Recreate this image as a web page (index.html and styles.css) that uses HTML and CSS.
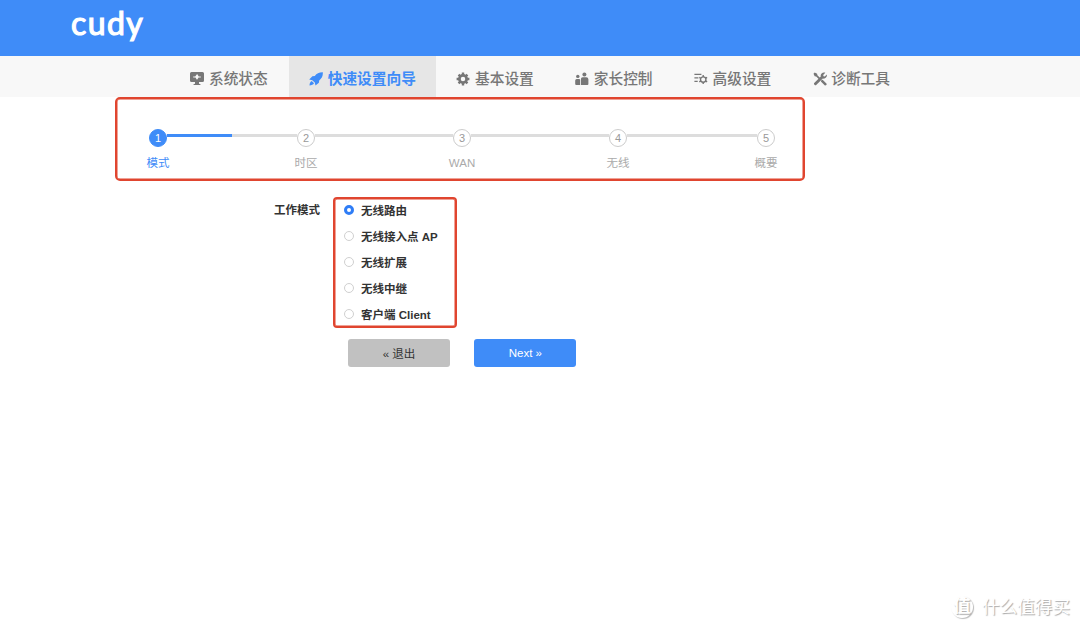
FILE: index.html
```html
<!DOCTYPE html>
<html lang="zh-CN">
<head>
    <meta charset="utf-8">
    <title>cudy</title>
    <link rel="stylesheet" href="styles.css">
</head>
<body>
    <header class="header">
        <span class="logo">cudy</span>
    </header>

    <nav class="nav">
        <a class="tab">
            <svg class="icon" viewBox="0 0 14 14"><path fill-rule="evenodd" d="M1.500 0h11q1.500 0 1.500 1.500v7q0 1.500-1.500 1.500h-3.500v1.700l1.500.5v.8h-7v-.8l1.500-.5v-1.700h-3.500q-1.500 0-1.500-1.500v-7q0-1.500 1.500-1.500zM3.200 4.500v1h2.300l1.200 1.900h.6l1.300-1.900h2.200v-1h-2l-1.700-2.600-1.900 2.600z"/></svg>
            <span>系统状态</span>
        </a>
        <a class="tab active">
            <svg class="icon" viewBox="0 0 14 14"><path d="M13.800.200c.3 3.600-.8 6-3.600 8.300l-.3 2.300-3.400 2.800-.7-3-2.500-2.400-3.100-.6 3.200-3.300 2.400-.3c1.900-2.700 4.400-3.900 8-3.800zM2.700 9l2.300 2.300c-.8 1.400-2.400 2-4.500 2.100.1-2 .7-3.700 2.200-4.400z"/></svg>
            <span>快速设置向导</span>
        </a>
        <a class="tab">
            <svg class="icon" viewBox="0 0 14 14">
                <circle cx="7" cy="7" r="3.600" fill="none" stroke="currentColor" stroke-width="2.700"/>
                <path d="M5.800.600h2.400v2.500h-2.400zM5.800 10.900h2.400v2.500h-2.400zM.6 5.800h2.500v2.400h-2.500zM10.900 5.800h2.500v2.400h-2.500zM1.700 3.400l1.700-1.700 1.800 1.800-1.700 1.700zM8.800 10.500l1.700-1.700 1.800 1.800-1.700 1.700zM1.700 10.600l1.800-1.800 1.700 1.700-1.800 1.800zM8.800 3.500l1.800-1.800 1.700 1.700-1.800 1.800z"/>
            </svg>
            <span>基本设置</span>
        </a>
        <a class="tab">
            <svg class="icon" viewBox="0 0 14 14">
                <circle cx="2.800" cy="4.400" r="1.700"/>
                <circle cx="9.400" cy="2.500" r="2"/>
                <path d="M.2 8.500q0-1.500 1.500-1.500h2.400q1 0 1 1v5h-3.900q-1 0-1-1zM5.900 7.200q0-1.900 1.800-1.900h3.500q2.200 0 2.200 1.900v4.800q0 1-1 1h-6.500z"/>
            </svg>
            <span>家长控制</span>
        </a>
        <a class="tab">
            <svg class="icon" viewBox="0 0 14 14">
                <path d="M.4 1.800h7v1.300h-7zM.4 5.300h4v1.300h-4zM.4 8.800h3.300v1.300h-3.300z"/>
                <circle cx="9.200" cy="7.600" r="2.700" fill="none" stroke="currentColor" stroke-width="1.400"/>
                <path fill="none" stroke="currentColor" stroke-width="1.400" d="M9.200 3.100v1.800M9.200 10.300v1.800M5.300 5.400l1.600.9M11.500 8.900l1.600.9M5.300 9.800l1.600-.9M11.500 6.300l1.600-.9"/>
            </svg>
            <span>高级设置</span>
        </a>
        <a class="tab">
            <svg class="icon" viewBox="0 0 14 14">
                <path d="M.5 1.700l1.200-1.200 2.400 1.300.3 1.500 3 3-1.200 1.200-3-3-1.500-.3zM8.300 8.200l1.300-.5 4 4q.4.600-.3 1.300t-1.400.4l-4-4z"/>
                <path d="M12.300.7l-2.100 2.200.3 1.300 1.300.3 2-2.100c.7 2.500-1.400 4.800-4 4.100l-6.600 6.600q-.8.600-1.700-.3t-.3-1.700l6.600-6.600c-.7-2.600 1.800-4.800 4.500-3.800z"/>
            </svg>
            <span>诊断工具</span>
        </a>
    </nav>

    <main class="main">
        <section class="wizard">
            <ol class="steps">
                <li class="step current"><span class="num">1</span><span class="label">模式</span></li>
                <li class="line half"></li>
                <li class="step"><span class="num">2</span><span class="label">时区</span></li>
                <li class="line long"></li>
                <li class="step"><span class="num">3</span><span class="label">WAN</span></li>
                <li class="line long"></li>
                <li class="step"><span class="num">4</span><span class="label">无线</span></li>
                <li class="line"></li>
                <li class="step"><span class="num">5</span><span class="label">概要</span></li>
            </ol>
        </section>

        <form class="form">
            <div class="row">
                <span class="title">工作模式</span>
                <div class="options">
                    <label class="option"><input type="radio" name="mode" checked>无线路由</label>
                    <label class="option"><input type="radio" name="mode">无线接入点 AP</label>
                    <label class="option"><input type="radio" name="mode">无线扩展</label>
                    <label class="option"><input type="radio" name="mode">无线中继</label>
                    <label class="option"><input type="radio" name="mode">客户端 Client</label>
                </div>
            </div>
            <div class="buttons">
                <button type="button" class="btn">« 退出</button>
                <button type="button" class="btn primary">Next »</button>
            </div>
        </form>
    </main>

    <div class="watermark">
        <span class="badge">值</span>
        <span>什么值得买</span>
    </div>
</body>
</html>
```

FILE: styles.css
```css
* {
    box-sizing: border-box;
}
body {
    margin: 0;
    height: 629px;
    overflow: hidden;
    background: #fff;
    color: #333;
    font-family: "Liberation Sans", "Noto Sans CJK SC", sans-serif;
    font-size: 11.5px;
}
.header {
    height: 56px;
    padding-left: 71px;
    background: #3f8cf8;
}
.logo {
    display: block;
    color: #fff;
    font-family: Lato, sans-serif;
    font-size: 32px;
    font-weight: 400;
    line-height: 45px;
    letter-spacing: 1.4px;
    -webkit-text-stroke: 1.2px #fff;
}

/* top menu */
.nav {
    display: flex;
    justify-content: center;
    height: 41px;
    padding-left: 1.4px;
    background: #f8f8f8;
}
.tab {
    display: flex;
    align-items: center;
    gap: 4.6px;
    padding: 4px 21.2px 0 20.2px;
    color: #777;
    font-size: 14.7px;
    font-weight: 500;
    line-height: 20px;
}
.tab.active {
    padding-right: 20.4px;
    background: #e6e6e6;
    color: #3f8cf8;
    font-weight: bold;
}
.icon {
    width: 14px;
    height: 14px;
    fill: currentColor;
}

/* wizard steps */
.main {
    padding-left: 115px;
}
.wizard {
    width: 690px;
    height: 84px;
    padding: 30px 0 0 32px;
    border: 2px solid #e0452f;
    border-radius: 5px;
    box-shadow: inset 0 0 0 0.5px #e0452f;
}
.steps {
    display: flex;
    margin: 0;
    padding: 0;
    list-style: none;
}
.step {
    display: flex;
    flex-direction: column;
    align-items: center;
    gap: 8px;
    width: 18px;
    color: #aaa;
}
.num {
    width: 18px;
    height: 18px;
    border: 1px solid #ccc;
    border-radius: 50%;
    color: #999;
    font-size: 11px;
    line-height: 17px;
    text-align: center;
}
.label {
    line-height: 16px;
    white-space: nowrap;
}
.current {
    color: #3f8cf8;
}
.current .num {
    background: #3f8cf8;
    border-color: #3f8cf8;
    color: #fff;
}
.line {
    width: 130px;
    height: 3px;
    margin-top: 5px;
    background: #ddd;
}
.line.long {
    width: 138px;
}
.line.half {
    background: linear-gradient(to right, #3f8cf8 50%, #ddd 50%);
}

/* work mode */
.form {
    padding-top: 16px;
    font-weight: bold;
}
.row {
    display: flex;
    gap: 13px;
}
.title {
    width: 205px;
    padding-top: 4px;
    line-height: 18px;
    text-align: right;
}
.options {
    width: 124px;
    height: 131px;
    padding-left: 9px;
    border: 2px solid #e0452f;
    border-radius: 4px;
    box-shadow: inset 0 0 0 0.5px #e0452f;
}
.option {
    display: flex;
    align-items: center;
    gap: 7px;
    height: 26.2px;
    white-space: nowrap;
}
.option:first-child {
    height: 22px;
    margin-bottom: 1.5px;
}
.option input {
    appearance: none;
    width: 10px;
    height: 10px;
    margin: 0;
    border: 1px solid #d0d0d0;
    border-radius: 50%;
    background: #fff;
}
.option input:checked {
    border: 3px solid #2f7df6;
}
.buttons {
    display: flex;
    gap: 24.4px;
    padding: 11.4px 0 0 233px;
}
.btn {
    width: 102px;
    height: 28px;
    padding: 0;
    border: 0;
    border-radius: 3px;
    background: #c1c1c1;
    color: #333;
    font-family: inherit;
    font-size: 11.5px;
}
.btn.primary {
    background: #3f8cf8;
    color: #fff;
}

/* watermark over the page corner */
.watermark {
    position: absolute;
    right: 10px;
    bottom: 9px;
    display: flex;
    align-items: center;
    gap: 9px;
    color: #fff;
    font-size: 17.6px;
    line-height: 26px;
    text-shadow: 1px 1px 1px #aaa;
}
.badge {
    width: 22px;
    height: 22px;
    border-radius: 50%;
    box-shadow: 1px 1px 1px #bbb;
    font-size: 17px;
    font-weight: bold;
    line-height: 21px;
    text-align: center;
}
```
